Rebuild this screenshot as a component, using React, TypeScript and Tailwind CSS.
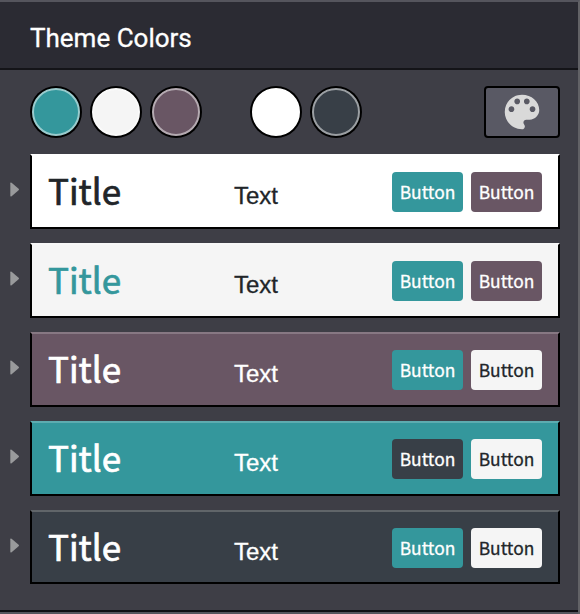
import React from "react";

const SWATCHES = [
  { fill: "bg-[#34979c]", ring: "border-[#9acbcd]" },
  { fill: "bg-[#f5f5f5]", ring: "border-[#fafafa]" },
  { fill: "bg-[#695664]", ring: "border-[#b4aab1]" },
];
const NEUTRALS = [
  { fill: "bg-white", ring: "border-white" },
  { fill: "bg-[#383f47]", ring: "border-[#9b9fa3]" },
];

const TEAL = "bg-[#34979c] text-white";
const PLUM = "bg-[#695664] text-white";
const SLATE = "bg-[#383f47] text-white";
const LIGHT = "bg-[#f5f5f5] text-[#212529]";

const ROWS = [
  { bg: "bg-white", top: "border-t-white", title: "text-[#212529]", text: "text-[#212529]", a: TEAL, b: PLUM },
  { bg: "bg-[#f5f5f5]", top: "border-t-[#f7f7f7]", title: "text-[#34979c]", text: "text-[#212529]", a: TEAL, b: PLUM },
  { bg: "bg-[#695664]", top: "border-t-[#877883]", title: "text-white", text: "text-white", a: TEAL, b: LIGHT },
  { bg: "bg-[#34979c]", top: "border-t-[#5dacb0]", title: "text-white", text: "text-white", a: SLATE, b: LIGHT },
  { bg: "bg-[#383f47]", top: "border-t-[#606569]", title: "text-white", text: "text-white", a: TEAL, b: LIGHT },
];

function Swatch({ fill, ring }: { fill: string; ring: string }) {
  return (
    <div className="size-[52px] rounded-full bg-black p-[2px]">
      <div className={`size-12 rounded-full border-2 ${fill} ${ring}`} />
    </div>
  );
}

function SampleButton({ tone }: { tone: string }) {
  return (
    <button
      className={`flex h-10 w-[71px] items-center justify-center rounded pb-px font-['Noto_Sans_CJK_SC',sans-serif] text-[17.4px] leading-none [-webkit-text-stroke:0.3px_currentColor] ${tone}`}
    >
      Button
    </button>
  );
}

function PresetRow({ row }: { row: (typeof ROWS)[number] }) {
  return (
    <div className="group flex h-[75px] items-start">
      <div className="flex w-[30px] pt-7 pl-[10px]">
        <svg width="10" height="15" viewBox="0 0 10 15" fill="#999a9c">
          <path d="M0.3 1.2Q0.3-0.2 1.6 0.8L8.6 6.7Q9.4 7.5 8.6 8.3L1.6 14.2Q0.3 15.2 0.3 13.8Z" />
        </svg>
      </div>
      <div
        className={`flex h-[75px] w-[530px] items-start border-2 border-x-black border-b-black pt-4 pr-4 pl-4 group-last:h-[74px] ${row.bg} ${row.top}`}
      >
        <div
          className={`w-[186px] font-['Noto_Sans_CJK_SC',sans-serif] text-[35px] leading-[35px] [-webkit-text-stroke:0.7px_currentColor] ${row.title}`}
        >
          Title
        </div>
        <div
          className={`flex-1 pt-3 font-['Liberation_Sans',sans-serif] text-[24px] leading-none [-webkit-text-stroke:0.3px_currentColor] ${row.text}`}
        >
          Text
        </div>
        <div className="flex gap-2">
          <SampleButton tone={row.a} />
          <SampleButton tone={row.b} />
        </div>
      </div>
    </div>
  );
}

export default function App() {
  return (
    <div className="flex h-[614px] w-[580px] flex-col overflow-hidden border-t-2 border-r-2 border-t-[#55555d] border-r-[#626266] bg-[#3e3e46]">
      <header className="flex h-[68px] shrink-0 items-center border-b-2 border-[#141418] bg-[#2b2b33] pt-[6px] pl-[30px] font-['Roboto',sans-serif] text-[26px] leading-none text-white [-webkit-text-stroke:0.3px_currentColor]">
        Theme Colors
      </header>
      <div className="flex h-[540px] shrink-0 flex-col pt-4">
        <div className="flex h-[52px] items-center pr-[18px] pl-[30px]">
          <div className="flex gap-2">
            {SWATCHES.map((s) => (
              <Swatch key={s.fill} {...s} />
            ))}
          </div>
          <div className="ml-12 flex gap-2">
            {NEUTRALS.map((s) => (
              <Swatch key={s.fill} {...s} />
            ))}
          </div>
          <button className="ml-auto flex h-[52px] w-[76px] items-center justify-center rounded border-2 border-black bg-[#595964]">
            <svg width="46" height="46" viewBox="0 0 24 24" fill="#d9d9d9">
              <path d="M12 3c-4.97 0-9 4.03-9 9s4.03 9 9 9c.83 0 1.5-.67 1.5-1.5 0-.39-.15-.74-.39-1.01-.23-.26-.38-.61-.38-.99 0-.83.67-1.5 1.5-1.5H16c2.76 0 5-2.24 5-5 0-4.42-4.03-8-9-8zm-5.5 9c-.83 0-1.5-.67-1.5-1.5S5.67 9 6.5 9 8 9.67 8 10.5 7.33 12 6.5 12zm3-4C8.67 8 8 7.33 8 6.5S8.67 5 9.5 5s1.5.67 1.5 1.5S10.33 8 9.5 8zm5 0c-.83 0-1.5-.67-1.5-1.5S13.67 5 14.5 5s1.5.67 1.5 1.5S15.33 8 14.5 8zm3 4c-.83 0-1.5-.67-1.5-1.5S16.67 9 17.5 9s1.5.67 1.5 1.5-.67 1.5-1.5 1.5z" />
            </svg>
          </button>
        </div>
        <div className="mt-4 flex flex-col gap-[14px]">
          {ROWS.map((row, i) => (
            <PresetRow key={i} row={row} />
          ))}
        </div>
      </div>
      <div className="h-1 shrink-0 border-t-2 border-[#101014] bg-[#55555d]" />
    </div>
  );
}
